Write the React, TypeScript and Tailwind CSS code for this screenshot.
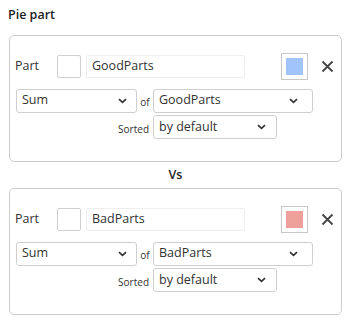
import React from "react";

function Chevron() {
  return (
    <svg width="9" height="6" viewBox="0 0 9 6" className="shrink-0">
      <path d="M1 1.2 L4.5 4.3 L8 1.2" fill="none" stroke="#333" strokeWidth="1.7" />
    </svg>
  );
}

function Select({ text, w, chevRight }: { text: string; w: string; chevRight: string }) {
  return (
    <div className={`${w} h-[24px] border border-[#cfcfcf] rounded-[3px] bg-white flex items-center justify-between pl-[5px] ${chevRight}`}>
      <span className="text-[12.5px] text-[#333] leading-none">{text}</span>
      <Chevron />
    </div>
  );
}

function Card({ name, color }: { name: string; color: string }) {
  return (
    <div className="w-[333px] border border-[#cccccc] rounded-[5px] bg-white pt-[17px] pb-[22px] pl-[6px]">
      <div className="flex items-center h-[27px]">
        <span className="-ml-[1px] w-[42px] text-[12.5px] text-[#333]">Part</span>
        <div className="w-[24px] h-[23px] border border-[#cfcfcf] rounded-[2px] bg-white" />
        <div className="ml-[5px] w-[159px] h-[23px] border border-[#eeeeee] rounded-[2px] bg-white flex items-center pl-[5px]">
          <span className="text-[12.5px] text-[#333]">{name}</span>
        </div>
        <div className="ml-[36px] w-[27px] h-[27px] border border-[#c8c8c8] p-[4px] bg-white">
          <div className="w-full h-full" style={{ backgroundColor: color }} />
        </div>
        <svg width="13" height="13" viewBox="0 0 13 13" className="ml-[13px]">
          <path d="M1.5 1.5 L11.5 11.5 M11.5 1.5 L1.5 11.5" stroke="#444" strokeWidth="1.8" />
        </svg>
      </div>
      <div className="flex items-center mt-[8px] h-[25px]">
        <Select text="Sum" w="w-[121px]" chevRight="pr-[9px]" />
        <span className="w-[16px] text-center text-[10px] text-[#333] pt-[4px]">of</span>
        <Select text={name} w="w-[160px]" chevRight="pr-[14px]" />
      </div>
      <div className="flex items-center mt-[2px] h-[24px]">
        <span className="w-[137px] pr-[4px] text-right text-[10px] text-[#333] pt-[4px]">Sorted</span>
        <Select text="by default" w="w-[124px]" chevRight="pr-[10px]" />
      </div>
    </div>
  );
}

export default function App() {
  return (
    <div className="w-[352px] h-[322px] bg-white" style={{ fontFamily: '"Open Sans", "Noto Sans", sans-serif' }}>
      <div className="pl-[8px] pt-[6px] h-[35px] text-[12.5px] font-semibold text-[#222]">Pie part</div>
      <div className="pl-[9px]">
        <Card name="GoodParts" color="#a0c4fb" />
        <div className="w-[333px] h-[26px] flex items-center justify-center text-[12.5px] font-semibold text-[#222]">Vs</div>
        <Card name="BadParts" color="#eea09a" />
      </div>
    </div>
  );
}
